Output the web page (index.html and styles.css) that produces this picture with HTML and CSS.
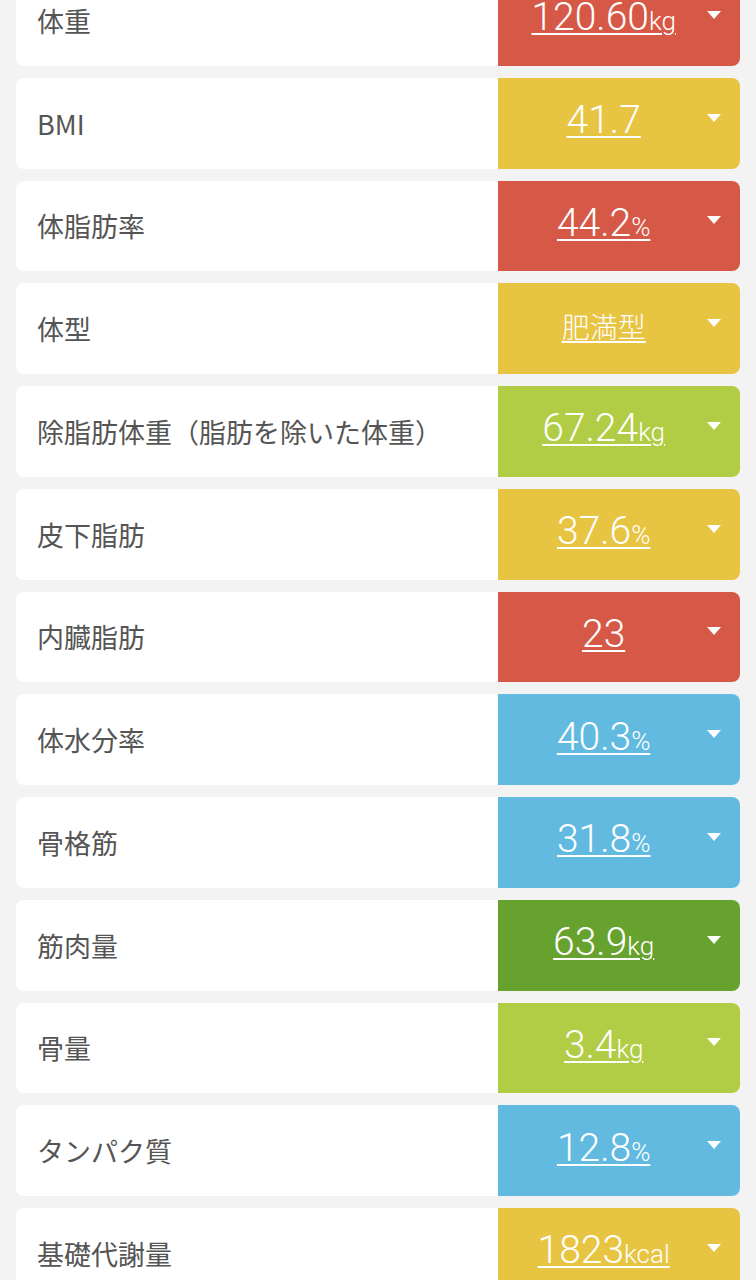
FILE: index.html
```html
<!DOCTYPE html>
<html lang="ja">
  <head>
    <meta charset="UTF-8" />
    <meta name="viewport" content="width=device-width, initial-scale=1.0" />
    <title>体組成</title>
    <link rel="stylesheet" href="styles.css">
  </head>
  <body>
    <!-- 測定結果リスト -->
    <div class="result-list" id="resultList"></div>

    <script>
      const resultList = document.getElementById("resultList");

      // level: red / yellow / lime / blue / green
      const results = [
        { label: "体重", value: "120.60", unit: "kg", level: "red" },
        { label: "BMI", value: "41.7", unit: "", level: "yellow" },
        { label: "体脂肪率", value: "44.2", unit: "%", level: "red" },
        { label: "体型", value: "肥満型", unit: "", level: "yellow", text: true },
        { label: "除脂肪体重（脂肪を除いた体重）", value: "67.24", unit: "kg", level: "lime" },
        { label: "皮下脂肪", value: "37.6", unit: "%", level: "yellow" },
        { label: "内臓脂肪", value: "23", unit: "", level: "red" },
        { label: "体水分率", value: "40.3", unit: "%", level: "blue" },
        { label: "骨格筋", value: "31.8", unit: "%", level: "blue" },
        { label: "筋肉量", value: "63.9", unit: "kg", level: "green" },
        { label: "骨量", value: "3.4", unit: "kg", level: "lime" },
        { label: "タンパク質", value: "12.8", unit: "%", level: "blue" },
        { label: "基礎代謝量", value: "1823", unit: "kcal", level: "yellow" },
      ];

      results.forEach((item) => {
        const row = document.createElement("div");
        row.classList.add("result-row");

        const label = document.createElement("div");
        label.classList.add("result-label");
        label.textContent = item.label;

        const panel = document.createElement("div");
        panel.classList.add("result-panel", "level-" + item.level);

        const valueWrap = document.createElement("div");
        valueWrap.classList.add("result-value");

        const link = document.createElement("a");
        link.href = "#";
        link.classList.add(item.text ? "value-text" : "value-num");
        link.textContent = item.value;
        if (item.unit) {
          const unit = document.createElement("span");
          unit.classList.add("value-unit");
          unit.textContent = item.unit;
          link.appendChild(unit);
        }
        valueWrap.appendChild(link);

        const arrow = document.createElement("span");
        arrow.classList.add("result-arrow");

        panel.appendChild(valueWrap);
        panel.appendChild(arrow);
        row.appendChild(label);
        row.appendChild(panel);
        resultList.appendChild(row);
      });
    </script>
  </body>
</html>
```

FILE: styles.css
```css
body {
  margin: 0;
  background: #f3f3f3;
  font-family: "Noto Sans CJK JP", "Noto Sans", sans-serif;
}

/* リスト */
.result-list {
  display: flex;
  flex-direction: column;
  gap: 12px;
  padding: 0 16px;
  margin-top: -25px;
}

.result-row {
  display: flex;
  height: 90.75px;
  background: #ffffff;
  border-radius: 8px;
  overflow: hidden;
}

.result-label {
  flex: 1;
  display: flex;
  align-items: center;
  padding-left: 21px;
  font-size: 27px;
  color: #555555;
  white-space: nowrap;
}

/* 右側の色付きパネル */
.result-panel {
  width: 241.7px;
  display: flex;
  align-items: center;
}

.result-value {
  flex: 1;
  text-align: center;
  line-height: 40px;
}

.result-value a {
  color: #ffffff;
  text-decoration: underline;
  text-decoration-thickness: 2px;
  text-underline-offset: 3px;
}

.value-num {
  font-family: Roboto, "Liberation Sans", sans-serif;
  font-weight: 300;
  font-size: 39px;
}

.value-unit {
  font-size: 26px;
}

.value-text {
  font-family: "Noto Sans CJK JP", sans-serif;
  font-weight: 300;
  font-size: 28px;
}

.result-arrow {
  width: 0;
  height: 0;
  border-left: 7px solid transparent;
  border-right: 7px solid transparent;
  border-top: 8px solid #ffffff;
  margin-left: -2px;
  margin-right: 19px;
  margin-bottom: 11px;
}

/* 判定カラー */
.level-red {
  background-color: #d65846;
}
.level-yellow {
  background-color: #e8c443;
}
.level-lime {
  background-color: #b1cc45;
}
.level-blue {
  background-color: #62bae0;
}
.level-green {
  background-color: #67a22f;
}
```
